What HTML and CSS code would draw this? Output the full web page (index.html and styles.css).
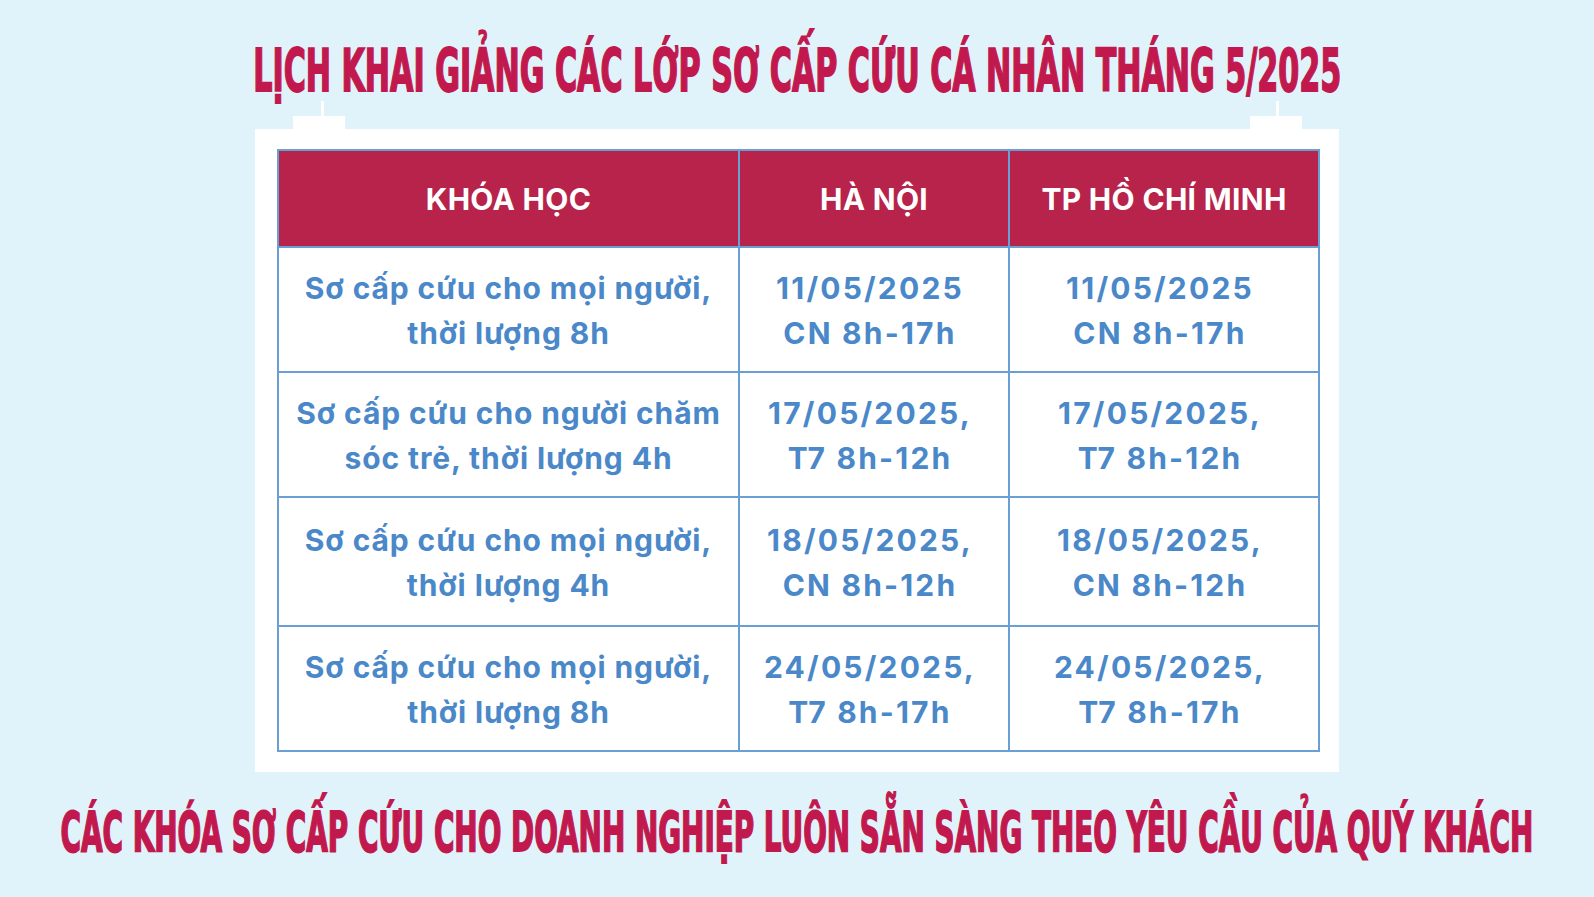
FILE: index.html
```html
<!DOCTYPE html>
<html lang="vi">
<head>
<meta charset="utf-8">
<title>Lịch khai giảng</title>
<link rel="stylesheet" href="styles.css">
</head>
<body>
<div class="page">
  <h1 class="title"><span class="squeeze squeeze-title">LỊCH KHAI GIẢNG CÁC LỚP SƠ CẤP CỨU CÁ NHÂN THÁNG 5/2025</span></h1>
  <div class="board">
    <span class="tab tab-left"></span>
    <span class="tab tab-right"></span>
    <table class="schedule">
      <colgroup>
        <col class="c1"><col class="c2"><col class="c3">
      </colgroup>
      <thead>
        <tr class="head"><th>KHÓA HỌC</th><th>HÀ NỘI</th><th>TP HỒ CHÍ MINH</th></tr>
      </thead>
      <tbody>
        <tr class="r1"><td class="course">Sơ cấp cứu cho mọi người,<br>thời lượng 8h</td><td class="date">11/05/2025<br>CN 8h-17h</td><td class="date">11/05/2025<br>CN 8h-17h</td></tr>
        <tr class="r2"><td class="course">Sơ cấp cứu cho người chăm<br>sóc trẻ, thời lượng 4h</td><td class="date">17/05/2025,<br>T7 8h-12h</td><td class="date">17/05/2025,<br>T7 8h-12h</td></tr>
        <tr class="r3"><td class="course">Sơ cấp cứu cho mọi người,<br>thời lượng 4h</td><td class="date">18/05/2025,<br>CN 8h-12h</td><td class="date">18/05/2025,<br>CN 8h-12h</td></tr>
        <tr class="r4"><td class="course">Sơ cấp cứu cho mọi người,<br>thời lượng 8h</td><td class="date">24/05/2025,<br>T7 8h-17h</td><td class="date">24/05/2025,<br>T7 8h-17h</td></tr>
      </tbody>
    </table>
  </div>
  <p class="cta"><span class="squeeze squeeze-cta">CÁC KHÓA SƠ CẤP CỨU CHO DOANH NGHIỆP LUÔN SẴN SÀNG THEO YÊU CẦU CỦA QUÝ KHÁCH</span></p>
</div>
</body>
</html>
```
FILE: styles.css
```css
html, body {
  margin: 0;
  padding: 0;
}
body {
  background: #e0f3fa;
  width: 1594px;
  height: 897px;
  overflow: hidden;
}
.page {
  display: flex;
  flex-direction: column;
  align-items: center;
}
.title, .cta {
  margin: 0;
  color: #c1194e;
  font-family: "DejaVu Sans Condensed", "DejaVu Sans", sans-serif;
  font-weight: 700;
  white-space: nowrap;
  display: flex;
  justify-content: center;
  width: 1594px;
}
.title {
  margin-top: 41px;
  font-size: 58px;
  line-height: 60px;
  height: 60px;
}
.cta {
  margin-top: 33px;
  font-size: 55px;
  line-height: 55px;
  height: 55px;
}
.squeeze {
  display: inline-block;
  -webkit-text-stroke: 1.8px #c1194e;
}
.squeeze-title { transform: scaleX(0.578); }
.squeeze-cta { transform: scaleX(0.563); }

.board {
  position: relative;
  margin-top: 28px;
  width: 1084px;
  box-sizing: border-box;
  padding: 20px 21px 20px 22px;
  background: #ffffff;
}
.tab {
  position: absolute;
  top: -13px;
  width: 52px;
  height: 13px;
  background: #ffffff;
}
.tab::before {
  content: "";
  position: absolute;
  left: 28px;
  top: -15px;
  width: 3px;
  height: 15px;
  background: #ffffff;
}
.tab-left { left: 38px; }
.tab-right { left: 995px; }
.tab-right::before { left: 26px; }

.schedule {
  width: 1041px;
  border-collapse: collapse;
  table-layout: fixed;
  font-family: Inter, "Noto Sans", sans-serif;
  font-weight: 700;
}
.c1 { width: 461px; }
.c2 { width: 270px; }
.c3 { width: 310px; }
.schedule th, .schedule td {
  border: 2px solid #6a9fd6;
  text-align: center;
  vertical-align: middle;
  padding: 0;
}
.schedule th {
  background: #b7234a;
  color: #ffffff;
  font-size: 30px;
  letter-spacing: 0.3px;
  height: 95px;
}
.schedule td {
  color: #4a88c9;
  font-size: 30px;
  line-height: 45px;
  padding-top: 2px;
}
.schedule td.course {
  letter-spacing: 0.9px;
}
.schedule td.date {
  letter-spacing: 2.2px;
  padding-right: 8px;
}
.r1 td, .r2 td, .r4 td { height: 121px; }
.r3 td { height: 125px; }
```
